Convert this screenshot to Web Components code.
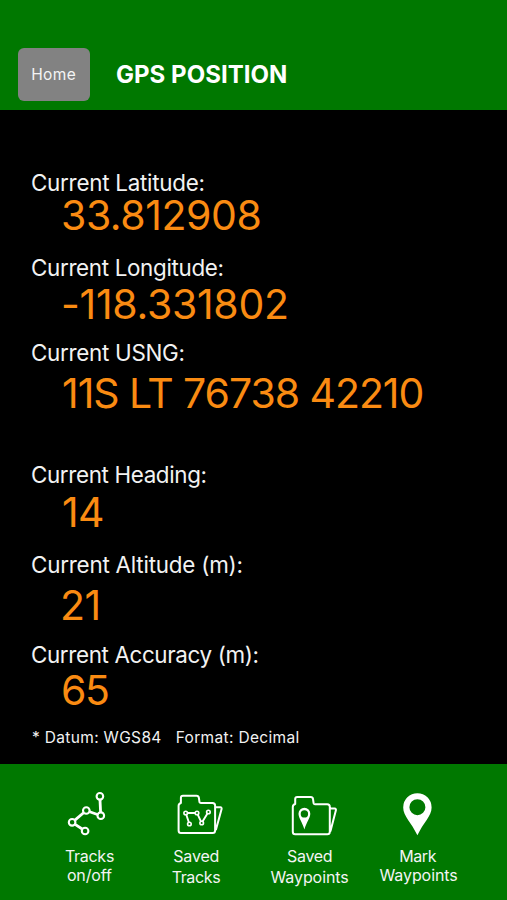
<!DOCTYPE html>
<html lang="en">
<head>
<meta charset="utf-8">
<title>GPS Position</title>
<style>
html,body{margin:0;background:#000;}
body{font-family:Inter,"Liberation Sans",sans-serif;color:#f2f2f2;width:507px;height:900px;overflow:hidden}
</style>
</head>
<body>
<gps-app></gps-app>
<script>
const ctx = document.createElement('canvas').getContext('2d');

/* One line of text whose visible glyphs span exactly `ink` pixels. */
class FitText extends HTMLElement {
  connectedCallback() {
    const ink = parseFloat(this.getAttribute('ink'));
    const root = this.attachShadow({mode: 'open'});
    root.innerHTML = '<style>:host{display:block;white-space:pre}span{display:inline-block}</style><span><slot></slot></span>';
    const cs = getComputedStyle(this);
    ctx.font = `${cs.fontWeight} ${cs.fontSize} ${cs.fontFamily}`;
    const text = this.textContent;
    const m = ctx.measureText(text);
    const natural = m.actualBoundingBoxRight + m.actualBoundingBoxLeft;
    const ls = (ink - natural) / (text.length - 1);
    const span = root.querySelector('span');
    span.style.letterSpacing = ls.toFixed(3) + 'px';
    span.style.marginLeft = m.actualBoundingBoxLeft.toFixed(2) + 'px';
    span.style.marginRight = (m.actualBoundingBoxRight - m.width - ls).toFixed(2) + 'px';
  }
}

class TopBar extends HTMLElement {
  connectedCallback() {
    this.attachShadow({mode: 'open'}).innerHTML = `
<style>
:host{display:flex;box-sizing:border-box;height:110px;padding:48px 0 0 18px;background:#007800;gap:27px;align-items:flex-start}
button{appearance:none;border:0;margin:0;font-family:inherit;display:flex;align-items:center;justify-content:center;width:72px;height:53px;border-radius:6px;background:#828282;color:#f4f4f4;font-size:15.5px;line-height:20px;padding:1px 0 0}
h1{margin:12.5px 0 0;font-size:24px;font-weight:700;line-height:28px;color:#fff;}
</style>
<button><fit-text ink="43.5">Home</fit-text></button>
<h1><fit-text ink="169">GPS POSITION</fit-text></h1>`;
  }
}

class GpsReading extends HTMLElement {
  connectedCallback() {
    const a = n => this.getAttribute(n);
    this.attachShadow({mode: 'open'}).innerHTML = `
<style>
:host{display:flex;flex-direction:column;height:${a('h')}px}
.label{font-size:22.4px;line-height:24px;padding-left:32px}
.value{font-size:41px;line-height:40px;color:#fa8b12;padding-left:63px;margin-top:${a('gap')}px}
</style>
<fit-text class="label" ink="${a('lw')}">${a('label')}</fit-text>
<fit-text class="value" ink="${a('vw')}">${a('value')}</fit-text>`;
  }
}

class NavItem extends HTMLElement {
  connectedCallback() {
    const a = n => this.getAttribute(n);
    this.attachShadow({mode: 'open'}).innerHTML = `
<style>
:host{display:flex;flex-direction:column;align-items:center;width:${a('w')}px;font-size:16px}
::slotted(svg){display:block;width:64px;height:60px}
fit-text{line-height:20px}
.b{line-height:${a('lead')}px}
</style>
<slot></slot>
<fit-text style="margin-top:2px" ink="${a('w1')}">${a('l1')}</fit-text>
<fit-text class="b" ink="${a('w2')}">${a('l2')}</fit-text>`;
  }
}

class GpsApp extends HTMLElement {
  connectedCallback() {
    this.attachShadow({mode: 'open'}).innerHTML = `
<style>
:host{display:flex;flex-direction:column;width:507px;height:900px;background:#000}
main{flex:1;padding-top:61px;display:flex;flex-direction:column}
.note{font-size:15.5px;line-height:20px;padding-left:32px}
nav{display:flex;box-sizing:border-box;height:136px;background:#007800;padding:20px 0 0 36.4px;color:#f4f4f4}
svg{fill:none;stroke:#fff;stroke-width:2;stroke-linejoin:round;stroke-linecap:round}
</style>
<top-bar></top-bar>
<main>
<gps-reading h="85" gap="0" label="Current Latitude:" lw="171.5" value="33.812908" vw="196.5"></gps-reading>
<gps-reading h="85" gap="4" label="Current Longitude:" lw="190.5" value="-118.331802" vw="224"></gps-reading>
<gps-reading h="122" gap="8" label="Current USNG:" lw="151.5" value="11S LT 76738 42210" vw="359.5"></gps-reading>
<gps-reading h="90" gap="5" label="Current Heading:" lw="173.5" value="14" vw="40"></gps-reading>
<gps-reading h="90" gap="8" label="Current Altitude (m):" lw="209.5" value="21" vw="35.5"></gps-reading>
<gps-reading h="84.5" gap="3" label="Current Accuracy (m):" lw="225.5" value="65" vw="45"></gps-reading>
<fit-text class="note" ink="266.5">* Datum: WGS84   Format: Decimal</fit-text>
</main>
<nav>
<nav-item w="106" l1="Tracks" w1="49" l2="on/off" w2="45" lead="18">
<svg viewBox="57.4 784 64 60"><g stroke-width="2.1"><circle cx="100.3" cy="796.3" r="3.3"/><circle cx="101.2" cy="815.7" r="3.3"/><circle cx="86.7" cy="810.5" r="3.3"/><circle cx="72.5" cy="822.3" r="3.3"/><circle cx="85.5" cy="831" r="3.3"/></g><path stroke-width="2.8" stroke-linecap="butt" d="M100.4 799.9L101 812.2M97.8 814.5L90 811.7M84 812.8L75.3 820.1M75.5 824.4L82.6 829"/></svg>
</nav-item>
<nav-item w="107" l1="Saved" w1="45.5" l2="Tracks" w2="48.5" lead="23">
<svg viewBox="164.3 784 64 60"><path d="M181.2 803V797.8Q181.2 795.8 183.2 795.8H196.8Q198.9 795.8 199.2 798L199.8 802.2Q200.1 803 201.2 803H212.8Q215.4 803 215.4 805.5V830.5Q215.4 833 213 833H181.3Q178.9 833 178.9 830.5V805.8Q178.9 803.7 181.2 803M216.5 807.3H220.6Q222.2 807.4 221.9 809L216.3 829.5"/><g stroke-width="1.6"><circle cx="186" cy="813" r="1.8"/><circle cx="197.3" cy="813" r="1.8"/><circle cx="189.7" cy="824" r="1.8"/><circle cx="202" cy="823" r="1.8"/><circle cx="208.7" cy="812" r="1.8"/><path stroke-width="1.9" d="M188 813H195.3M186.7 815L189 822M198.2 814.8L201.1 821.2M203 821.3L207.6 813.8"/></g></svg>
</nav-item>
<nav-item w="120" l1="Saved" w1="45" l2="Waypoints" w2="78" lead="23">
<svg viewBox="278 784 64 60"><path d="M296.2 804V799Q296.2 797 298.2 797H311.8Q313.7 797 314 799L314.6 803.2Q314.9 804.2 316 804.2H328.3Q330.8 804.2 330.8 806.7V831.7Q330.8 834.3 328.3 834.3H296.2Q293.8 834.3 293.8 831.8V807Q293.8 804.7 296.2 804M331.8 808.6H335.6Q337.3 808.7 336.9 810.3L331.5 831"/><path fill="#fff" stroke="none" fill-rule="evenodd" d="M305.4 807.8A5.9 5.9 0 0 0 299.5 813.8C299.5 818 303.5 822.5 305.4 829.5C307.3 822.5 311.3 818 311.3 813.8A5.9 5.9 0 0 0 305.4 807.8M305.4 810.2A3.7 3.7 0 1 1 305.4 817.6A3.7 3.7 0 1 1 305.4 810.2"/></svg>
</nav-item>
<nav-item w="98" l1="Mark" w1="36.5" l2="Waypoints" w2="78" lead="18">
<svg viewBox="386.4 784 64 60"><path fill="#fff" stroke="none" fill-rule="evenodd" d="M417.8 793.2A14.2 14.2 0 0 0 403.6 807.4C403.6 816 412 822.5 417.8 835.3C423.6 822.5 432 816 432 807.4A14.2 14.2 0 0 0 417.8 793.2M417.8 799.2A8 8 0 1 1 417.8 815.2A8 8 0 1 1 417.8 799.2"/></svg>
</nav-item>
</nav>`;
  }
}
customElements.define('fit-text', FitText);
customElements.define('top-bar', TopBar);
customElements.define('gps-reading', GpsReading);
customElements.define('nav-item', NavItem);
customElements.define('gps-app', GpsApp);
</script>
</body>
</html>
